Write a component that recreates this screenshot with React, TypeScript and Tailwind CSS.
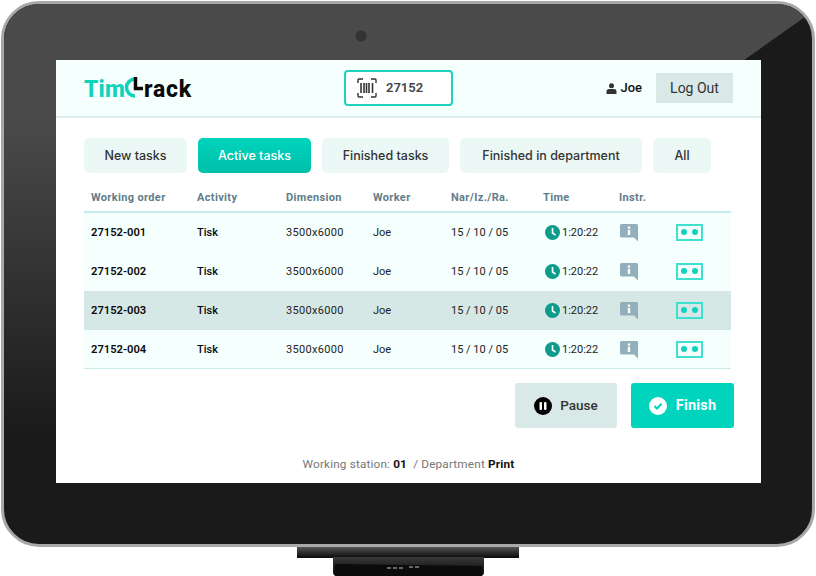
import React from "react";

const rows = ["27152-001", "27152-002", "27152-003", "27152-004"];
const tabs = [
  { label: "New tasks", width: "w-[103px]" },
  { label: "Active tasks", width: "w-[113px]", active: true },
  { label: "Finished tasks", width: "w-[127px]" },
  { label: "Finished in department", width: "w-[182px]" },
  { label: "All", width: "w-[58px]" },
];

const Logo = () => (
  <div className="flex w-[107px] h-[24px] items-center font-['Roboto',sans-serif] font-extrabold text-[23px] leading-none">
    <span className="text-[#10d3bb] tracking-[0.2px] mt-[3px]">Tim</span>
    <svg width="20" height="24" viewBox="0 0 20 24" className="shrink-0 -ml-[1px]">
      <path d="M11 3 A8.500 8.500 0 0 0 11 20" fill="none" stroke="#10d3bb" strokeWidth="3.500" />
      <path d="M11.500 1 V12.500 H19" fill="none" stroke="#0a0a0a" strokeWidth="3.500" />
    </svg>
    <span className="text-[#0a0a0a] tracking-[0.7px] mt-[3px]">rack</span>
  </div>
);

const BarcodeIcon = () => (
  <svg width="20" height="20" viewBox="0 0 20 20" fill="none" stroke="#333" strokeWidth="1.400">
    <path d="M1 5 V2 Q1 1 2 1 H6 M14 1 H18 Q19 1 19 2 V5 M1 15 V18 Q1 19 2 19 H6 M14 19 H18 Q19 19 19 18 V15" />
    <path d="M4 5 V15 M7 5 V15 M9.500 5 V15 M12 5 V15 M15.500 5 V15" strokeWidth="1.600" />
  </svg>
);

const UserIcon = () => (
  <svg width="11" height="11" viewBox="0 0 11 11" fill="#333">
    <circle cx="5.500" cy="2.700" r="2.500" />
    <path d="M0.500 11 V8.500 Q0.500 6 3 6 H8 Q10.500 6 10.500 8.500 V11 Z" />
  </svg>
);

const ClockIcon = () => (
  <svg width="15" height="15" viewBox="0 0 15 15" className="-mt-[1px]">
    <circle cx="7.500" cy="7.500" r="7.500" fill="#0d9c8c" />
    <path d="M7.500 3 V8 L10.500 10" fill="none" stroke="#fff" strokeWidth="1.600" />
  </svg>
);

const InfoIcon = () => (
  <svg width="18" height="18" viewBox="0 0 18 18">
    <path d="M1.500 0 H16.500 Q18 0 18 1.500 V17.500 L14 13.500 H1.500 Q0 13.500 0 12 V1.500 Q0 0 1.500 0 Z" fill="#93afbb" />
    <rect x="7.800" y="2.500" width="2.400" height="2.200" fill="#fff" />
    <rect x="7.800" y="5.800" width="2.400" height="5.200" fill="#fff" />
  </svg>
);

const Row = ({ id, highlighted }: { id: string; highlighted?: boolean }) => (
  <div
    className={`grid grid-cols-[106px_89px_87px_78px_92px_76px_57px_48px] items-center h-[39px] pl-[7px] pt-[1px] text-[11px] text-[#222] ${
      highlighted ? "bg-[#d6e8e6]" : "bg-[#f5fffe]"
    }`}
  >
    <span className="font-semibold text-[#0a0a0a] text-[11.200px]">{id}</span>
    <span className="font-medium text-[#0a0a0a]">Tisk</span>
    <span className="tracking-[0.3px]">3500x6000</span>
    <span>Joe</span>
    <span>15 / 10 / 05</span>
    <span className="flex items-center gap-[2px] pl-[2px]">
      <ClockIcon />
      1:20:22
    </span>
    <span className="pl-[1px] pb-[1px]">
      <InfoIcon />
    </span>
    <span className="flex items-center justify-center gap-[5px] w-[27px] h-[17px] -mt-[2px] border-2 border-[#3fe0cf]">
      <i className="w-[6px] h-[6px] rounded-full bg-[#10d2bd]" />
      <i className="w-[6px] h-[6px] rounded-full bg-[#10d2bd]" />
    </span>
  </div>
);

export default function App() {
  return (
    <div className="w-[816px] h-[576px] bg-white overflow-hidden flex flex-col items-center font-['Roboto',sans-serif]">
      <div className="relative w-[814px] h-[546px] mt-[1px] shrink-0 rounded-[38px] border-[3px] border-[#a8a8a8] bg-[#1a1a1a] overflow-hidden pl-[52px] pt-[56px]">
        {/* glare on the bezel */}
        <svg className="absolute inset-0" width="808" height="540" viewBox="0 0 808 540">
          <defs>
            <linearGradient id="glare" x1="0" y1="0" x2="0" y2="1">
              <stop offset="0.27" stopColor="#4a4a4a" />
              <stop offset="1" stopColor="#1a1a1a" />
            </linearGradient>
          </defs>
          <polygon points="0,0 808,0 808,8 740,56 52,56 52,430 0,430" fill="url(#glare)" />
          <circle cx="357" cy="32" r="5.500" fill="#333" />
        </svg>

        <div className="relative w-[705px] h-[423px] bg-white flex flex-col">
          <header className="flex items-center justify-between h-[58px] shrink-0 pl-[28px] pr-[28px] bg-[#f5fffe] border-b-2 border-[#dcecec]">
            <Logo />
            <div className="flex items-center gap-[9px] w-[109px] h-[36px] pl-[11px] rounded-[4px] border-2 border-[#1dd3c0] bg-white">
              <BarcodeIcon />
              <span className="text-[13px] font-semibold text-[#444]">27152</span>
            </div>
            <div className="flex items-center justify-end gap-[14px] w-[127px]">
              <div className="flex items-center gap-[3px] text-[13px] font-medium text-[#111]">
                <UserIcon />
                Joe
              </div>
              <button className="w-[77px] h-[30px] shrink-0 bg-[#d9e9e7] text-[14px] text-[#333]">Log Out</button>
            </div>
          </header>

          <main className="flex-1 flex flex-col pl-[28px]">
            <nav className="flex gap-[11px] mt-[20px] font-['Inter',sans-serif] text-[12.500px] font-medium">
              {tabs.map((tab) => (
                <button
                  key={tab.label}
                  className={`${tab.width} h-[35px] pt-[1px] rounded-[5px] ${
                    tab.active
                      ? "bg-gradient-to-b from-[#00d4bd] to-[#00bfa9] text-white"
                      : "bg-[#ebf8f6] text-[#333]"
                  }`}
                >
                  {tab.label}
                </button>
              ))}
            </nav>

            <div className="w-[647px] mt-[14px]">
              <div className="grid grid-cols-[106px_89px_87px_78px_92px_76px_57px_48px] items-center h-[26px] pb-[1px] pl-[7px] border-b-2 border-[#c5ecea] text-[11px] font-bold text-[#5f7d8a] tracking-[0.35px]">
                <span>Working order</span>
                <span>Activity</span>
                <span>Dimension</span>
                <span>Worker</span>
                <span>Nar/Iz./Ra.</span>
                <span>Time</span>
                <span>Instr.</span>
                <span />
              </div>
              {rows.map((id, i) => (
                <Row key={id} id={id} highlighted={i === 2} />
              ))}
              <div className="h-[1px] -mt-[1px] bg-[#c5ecea]" />
            </div>

            <div className="flex gap-[14px] w-[650px] justify-end mt-[14px]">
              <button className="flex items-center justify-center gap-[8px] w-[102px] h-[45px] rounded-[3px] bg-[#d9e9e7] text-[13.500px] font-medium text-[#333]">
                <svg width="18" height="18" viewBox="0 0 18 18">
                  <circle cx="9" cy="9" r="9" fill="#000" />
                  <rect x="5.500" y="5" width="2.500" height="8" rx="1" fill="#fff" />
                  <rect x="10" y="5" width="2.500" height="8" rx="1" fill="#fff" />
                </svg>
                Pause
              </button>
              <button className="flex items-center justify-center gap-[9px] w-[103px] h-[45px] rounded-[3px] bg-[#00d4bd] text-[14.500px] font-bold tracking-[0.2px] text-white">
                <svg width="18" height="18" viewBox="0 0 18 18">
                  <circle cx="9" cy="9" r="9" fill="#fff" />
                  <path d="M5.500 9 L8 11.500 L12.500 6.800" fill="none" stroke="#00d4bd" strokeWidth="2" />
                </svg>
                Finish
              </button>
            </div>

            <p className="w-[649px] mt-[28px] text-center text-[11.800px] tracking-[0.15px] text-[#777]">
              Working station: <b className="text-[#111]">01</b>&nbsp;&nbsp;/ Department <b className="text-[#111]">Print</b>
            </p>
          </main>
        </div>
      </div>

      {/* dock under the tablet */}
      <div className="w-[222px] h-[11px] shrink-0 bg-gradient-to-b from-[#555] to-[#0c0c0c]" />
      <div className="relative w-[151px] h-[19px] shrink-0 -mt-[1px] rounded-b-[4px] bg-gradient-to-b from-[#3a3a3a] to-[#080808]">
        <svg className="absolute inset-0" width="151" height="19" viewBox="0 0 151 19">
          <polygon points="2,7 149,9 149,19 2,19" fill="#0b0b0b" />
          <path d="M54 11 H72 M76 10 H88" stroke="#666" strokeWidth="2" strokeDasharray="4 2" />
        </svg>
      </div>
    </div>
  );
}
